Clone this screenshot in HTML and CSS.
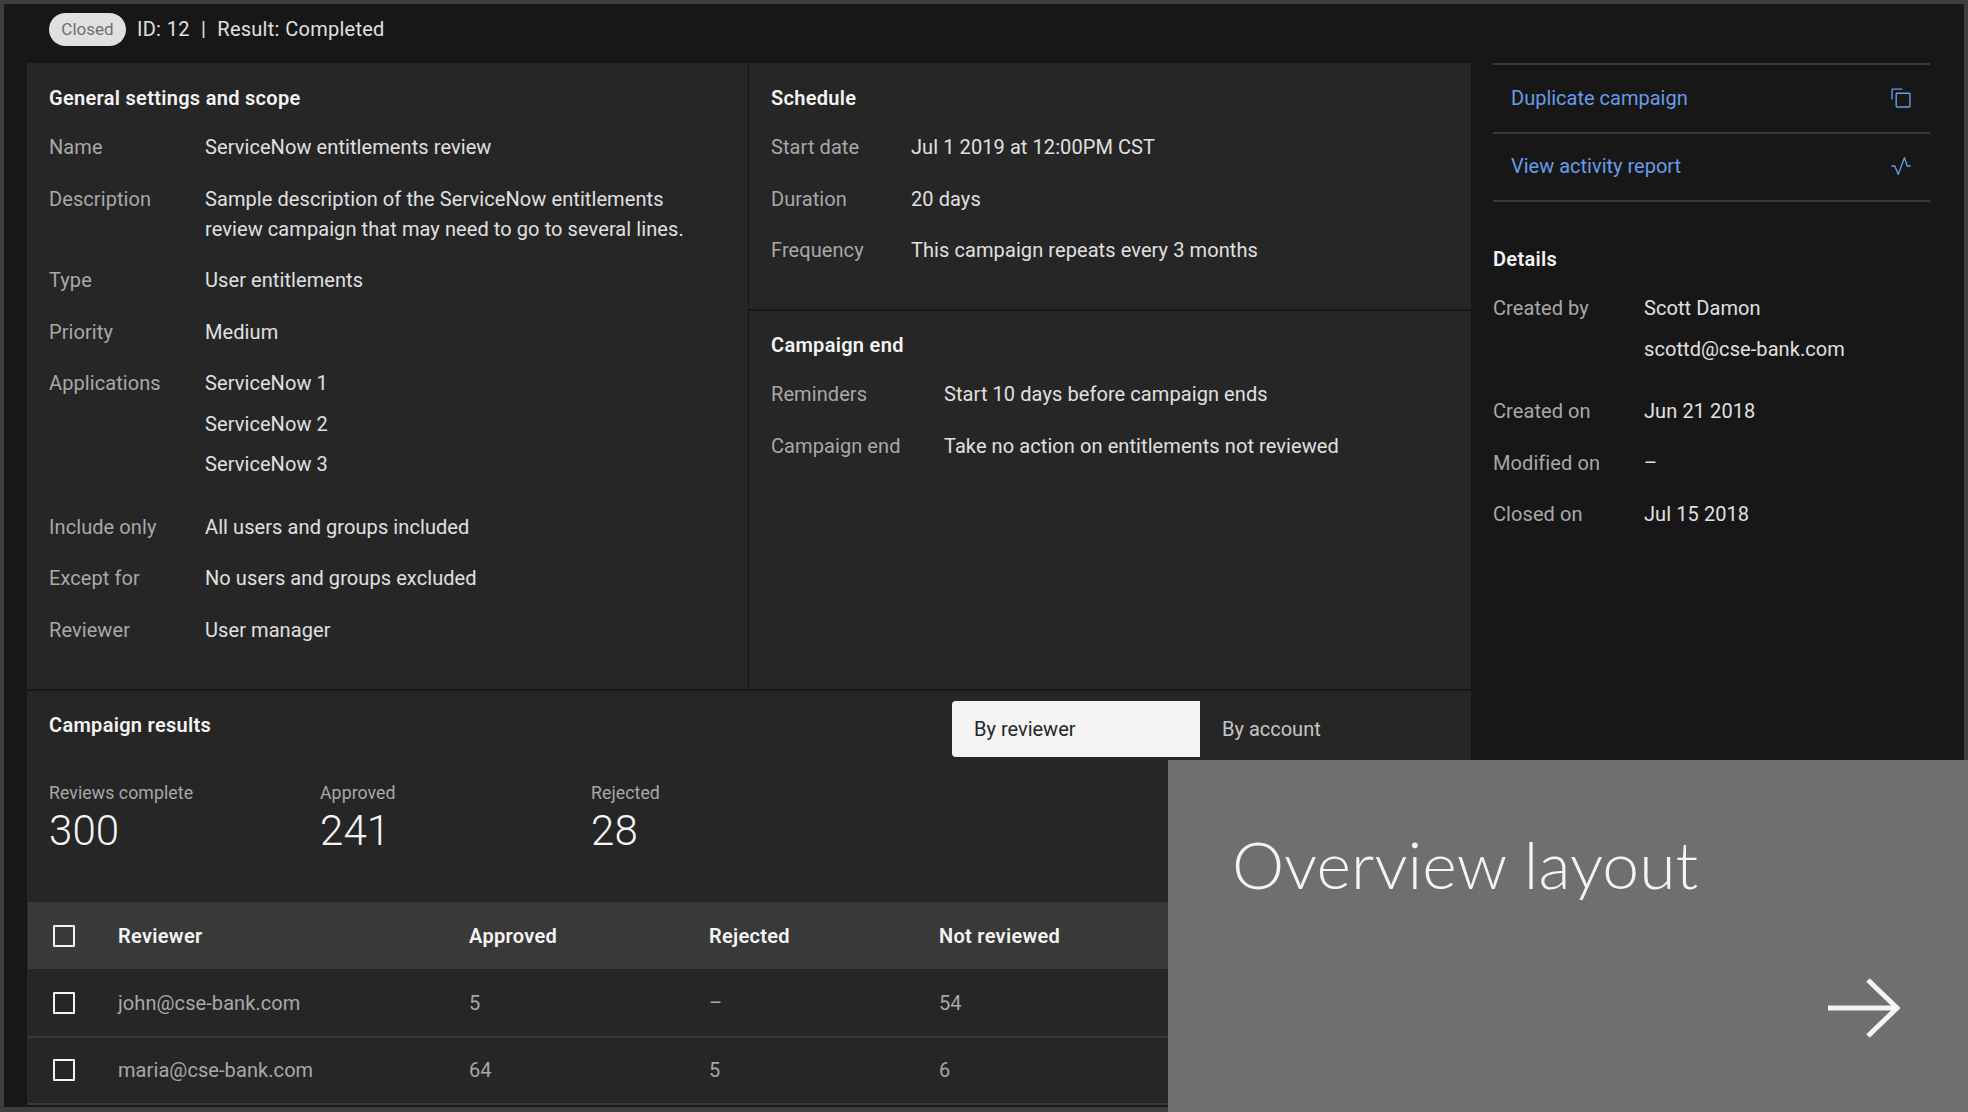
FILE: index.html
```html
<!DOCTYPE html>
<html lang="en">
<head>
    <meta charset="UTF-8">
    <meta name="viewport" content="width=device-width, initial-scale=1.0">
    <title>Overview layout</title>
    <link rel="stylesheet" href="styles.css">
</head>
<body>
    <div class="frame">
        <header class="status-bar">
            <span class="tag">Closed</span>
            <span>ID: 12&nbsp; |&nbsp; Result: Completed</span>
        </header>

        <div class="content">
            <main class="panel">
                <div class="top-sections">
                    <section class="general">
                        <h2>General settings and scope</h2>
                        <dl class="fields">
                            <dt>Name</dt>
                            <dd>ServiceNow entitlements review</dd>
                            <dt>Description</dt>
                            <dd>Sample description of the ServiceNow entitlements<br>review campaign that may need to go to several lines.</dd>
                            <dt>Type</dt>
                            <dd>User entitlements</dd>
                            <dt>Priority</dt>
                            <dd>Medium</dd>
                            <dt>Applications</dt>
                            <dd class="stack">
                                <div>ServiceNow 1</div>
                                <div>ServiceNow 2</div>
                                <div>ServiceNow 3</div>
                            </dd>
                            <dt>Include only</dt>
                            <dd>All users and groups included</dd>
                            <dt>Except for</dt>
                            <dd>No users and groups excluded</dd>
                            <dt>Reviewer</dt>
                            <dd>User manager</dd>
                        </dl>
                    </section>
                    <div class="right-sections">
                        <section class="schedule">
                            <h2>Schedule</h2>
                            <dl class="fields fields-schedule">
                                <dt>Start date</dt>
                                <dd>Jul 1 2019 at 12:00PM CST</dd>
                                <dt>Duration</dt>
                                <dd>20 days</dd>
                                <dt>Frequency</dt>
                                <dd>This campaign repeats every 3 months</dd>
                            </dl>
                        </section>
                        <section class="campaign-end">
                            <h2>Campaign end</h2>
                            <dl class="fields fields-end">
                                <dt>Reminders</dt>
                                <dd>Start 10 days before campaign ends</dd>
                                <dt>Campaign end</dt>
                                <dd>Take no action on entitlements not reviewed</dd>
                            </dl>
                        </section>
                    </div>
                </div>

                <section class="results">
                    <div class="results-head">
                        <h2>Campaign results</h2>
                        <div class="switcher">
                            <button class="switch-btn switch-on">By reviewer</button>
                            <button class="switch-btn">By account</button>
                        </div>
                    </div>
                    <div class="tiles">
                        <div class="tile">
                            <div class="tile-label">Reviews complete</div>
                            <div class="tile-value">300</div>
                        </div>
                        <div class="tile">
                            <div class="tile-label">Approved</div>
                            <div class="tile-value">241</div>
                        </div>
                        <div class="tile">
                            <div class="tile-label">Rejected</div>
                            <div class="tile-value">28</div>
                        </div>
                    </div>
                    <div class="table">
                        <div class="row row-head">
                            <span class="check"></span>
                            <span>Reviewer</span>
                            <span>Approved</span>
                            <span>Rejected</span>
                            <span>Not reviewed</span>
                        </div>
                        <div class="row">
                            <span class="check"></span>
                            <span>john@cse-bank.com</span>
                            <span>5</span>
                            <span>–</span>
                            <span>54</span>
                        </div>
                        <div class="row">
                            <span class="check"></span>
                            <span>maria@cse-bank.com</span>
                            <span>64</span>
                            <span>5</span>
                            <span>6</span>
                        </div>
                    </div>
                </section>
            </main>

            <aside class="sidebar">
                <a class="action" href="#">
                    Duplicate campaign
                    <svg class="action-icon" viewBox="0 0 32 32" fill="currentColor"><path d="M28,10V28H10V10H28m0-2H10a2,2,0,0,0-2,2V28a2,2,0,0,0,2,2H28a2,2,0,0,0,2-2V10a2,2,0,0,0-2-2Z"/><path d="M4,18H2V4A2,2,0,0,1,4,2H18V4H4Z"/></svg>
                </a>
                <a class="action" href="#">
                    View activity report
                    <svg class="action-icon" viewBox="0 0 32 32" fill="currentColor"><path d="M12,29a1,1,0,0,1-.92-.62L6.33,17H2V15H7a1,1,0,0,1,.92.62L12,25.28,20.06,3.65A1,1,0,0,1,21,3a1,1,0,0,1,.93.68L25.72,15H30v2H25a1,1,0,0,1-.95-.68L21,7,12.94,28.35A1,1,0,0,1,12,29Z"/></svg>
                </a>
                <h2 class="details-title">Details</h2>
                <dl class="fields fields-details">
                    <dt>Created by</dt>
                    <dd class="stack">
                        <div>Scott Damon</div>
                        <div>scottd@cse-bank.com</div>
                    </dd>
                    <dt>Created on</dt>
                    <dd>Jun 21 2018</dd>
                    <dt>Modified on</dt>
                    <dd>–</dd>
                    <dt>Closed on</dt>
                    <dd>Jul 15 2018</dd>
                </dl>
            </aside>
        </div>
    </div>

    <div class="overlay">
        <div class="overlay-title">Overview layout</div>
        <svg class="overlay-arrow" viewBox="0 0 74 60" fill="none" stroke="#f4f4f4" stroke-width="5"><path d="M0 30H69"/><path d="M40 2L69 30L40 58"/></svg>
    </div>
</body>
</html>
```

FILE: styles.css
```css
* {
    box-sizing: border-box;
}

html, body {
    margin: 0;
    padding: 0;
    height: 100%;
    overflow: hidden;
}

body {
    position: relative;
    font-family: 'Roboto', 'Liberation Sans', sans-serif;
    font-size: 20px;
    line-height: 30px;
    letter-spacing: 0.08px;
    background-color: #3d3d3d;
    color: #f4f4f4;
}

.frame {
    height: 1103px;
    margin: 4px 4px 0 4px;
    background-color: #171717;
    overflow: hidden;
}

.status-bar {
    height: 59px;
    padding: 0 0 9px 45px;
    display: flex;
    align-items: center;
    gap: 11px;
    color: #e0e0e0;
    letter-spacing: 0.25px;
    word-spacing: 0.4px;
}

.tag {
    width: 77px;
    height: 33px;
    border-radius: 17px;
    background-color: #e0e0e0;
    color: #6f6f6f;
    font-size: 17px;
    line-height: 33px;
    text-align: center;
    letter-spacing: 0;
}

.content {
    display: flex;
    align-items: flex-start;
}

.panel {
    width: 1444px;
    margin-left: 23px;
    background-color: #262626;
}

.sidebar {
    width: 437px;
    margin-left: 22px;
}

h2 {
    margin: 0;
    font-size: 20px;
    line-height: 30px;
    font-weight: 600;
    letter-spacing: 0.3px;
    color: #f4f4f4;
}

/* top part of the panel */
.top-sections {
    display: flex;
    height: 628px;
    border-bottom: 2px solid #171717;
}

.general {
    width: 722px;
    padding: 20px 22px;
    border-right: 1px solid #171717;
}

.right-sections {
    flex: 1;
}

.schedule {
    height: 248px;
    padding: 20px 22px;
    border-bottom: 2px solid #171717;
}

.campaign-end {
    padding: 19px 22px;
}

.fields {
    display: grid;
    grid-template-columns: 156px 1fr;
    row-gap: 21.5px;
    margin: 19px 0 0 0;
}

.fields dt {
    color: #a8a8a8;
}

.fields dd {
    margin: 0;
    color: #e0e0e0;
}

.stack div {
    margin-bottom: 10.5px;
}

.stack div:last-child {
    margin-bottom: 11px;
}

.fields-schedule {
    grid-template-columns: 140px 1fr;
}

.fields-end {
    grid-template-columns: 173px 1fr;
}

.fields-details {
    grid-template-columns: 151px 1fr;
}

/* sidebar links */
.action {
    height: 68.5px;
    padding: 0 18px 1px 18px;
    display: flex;
    align-items: center;
    justify-content: space-between;
    border-top: 2px solid #393939;
    color: #6a9be8;
    text-decoration: none;
    letter-spacing: 0;
}

.action + .details-title {
    border-top: 2px solid #393939;
    padding-top: 42px;
}

.action-icon {
    width: 22px;
    height: 22px;
}

/* results */
.results {
    padding: 0 0 0 22px;
}

.results-head {
    display: flex;
    justify-content: space-between;
    height: 68px;
}

.results-head h2 {
    padding-top: 19px;
}

.switcher {
    display: flex;
    width: 519px;
    height: 56px;
    margin-top: 10px;
}

.switch-btn {
    width: 248px;
    padding: 0 22px;
    border: none;
    background: none;
    font: inherit;
    color: #c6c6c6;
    text-align: left;
}

.switch-on {
    background-color: #f4f4f4;
    color: #262626;
    border-radius: 4px 0 0 4px;
}

.tiles {
    display: flex;
    height: 143px;
    padding-top: 22px;
}

.tile {
    width: 271px;
}

.tile-label {
    font-size: 17.7px;
    line-height: 24px;
    color: #a8a8a8;
}

.tile-value {
    font-size: 42px;
    line-height: 52px;
    font-weight: 300;
    color: #f4f4f4;
}

.table {
    margin-left: -21px;
}

.row {
    display: grid;
    grid-template-columns: 90px 351px 240px 230px 1fr;
    align-items: center;
    height: 67px;
    padding-bottom: 1px;
    border-bottom: 2px solid #393939;
    color: #a8a8a8;
}

.row-head {
    height: 67px;
    margin-bottom: 2px;
    padding-bottom: 0;
    background-color: #393939;
    border-bottom: none;
    color: #f4f4f4;
    font-weight: 600;
    letter-spacing: 0.3px;
}

.check {
    width: 22px;
    height: 22px;
    margin-left: 25px;
    border: 2px solid #f4f4f4;
    border-radius: 1px;
}

/* grey card laid over the page corner */
.overlay {
    position: absolute;
    left: 1168px;
    top: 760px;
    width: 800px;
    height: 352px;
    padding: 64px 0 0 64px;
    background-color: #6f6f6f;
}

.overlay-title {
    font-family: 'Lato', sans-serif;
    font-weight: 300;
    font-size: 66px;
    line-height: 80px;
    color: #f4f4f4;
}

.overlay-arrow {
    position: absolute;
    left: 660px;
    top: 218px;
    width: 74px;
    height: 60px;
}
```
